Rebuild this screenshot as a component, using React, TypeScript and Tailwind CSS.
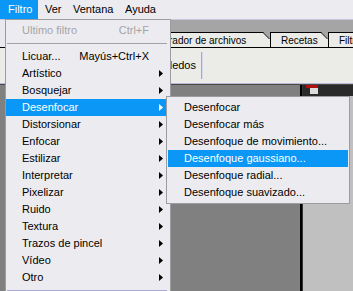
import React from 'react';

type Item =
  | { kind: 'item'; label: string; shortcut?: string; sub?: boolean; disabled?: boolean; active?: boolean }
  | { kind: 'sep'; tone?: 'gray' | 'blue' };

const filtroMenu: Item[] = [
  { kind: 'item', label: 'Ultimo filtro', shortcut: 'Ctrl+F', disabled: true },
  { kind: 'sep' },
  { kind: 'item', label: 'Licuar...', shortcut: 'Mayús+Ctrl+X' },
  { kind: 'item', label: 'Artístico', sub: true },
  { kind: 'item', label: 'Bosquejar', sub: true },
  { kind: 'item', label: 'Desenfocar', sub: true, active: true },
  { kind: 'item', label: 'Distorsionar', sub: true },
  { kind: 'item', label: 'Enfocar', sub: true },
  { kind: 'item', label: 'Estilizar', sub: true },
  { kind: 'item', label: 'Interpretar', sub: true },
  { kind: 'item', label: 'Pixelizar', sub: true },
  { kind: 'item', label: 'Ruido', sub: true },
  { kind: 'item', label: 'Textura', sub: true },
  { kind: 'item', label: 'Trazos de pincel', sub: true },
  { kind: 'item', label: 'Vídeo', sub: true },
  { kind: 'item', label: 'Otro', sub: true },
  { kind: 'sep', tone: 'blue' },
];

const desenfocarMenu: Item[] = [
  { kind: 'item', label: 'Desenfocar' },
  { kind: 'item', label: 'Desenfocar más' },
  { kind: 'item', label: 'Desenfoque de movimiento...' },
  { kind: 'item', label: 'Desenfoque gaussiano...', active: true },
  { kind: 'item', label: 'Desenfoque radial...' },
  { kind: 'item', label: 'Desenfoque suavizado...' },
];

const font = { fontFamily: '"Liberation Sans", Arial, sans-serif' };

function Arrow({ white }: { white?: boolean }) {
  return (
    <svg width="4" height="7" viewBox="0 0 4 7" className="shrink-0">
      <polygon points="0,0 4,3.5 0,7" fill={white ? '#ffffff' : '#000000'} />
    </svg>
  );
}

function MenuRows({ items }: { items: Item[] }) {
  return (
    <>
      {items.map((it, i) => {
        if (it.kind === 'sep') {
          return (
            <div key={i} className="h-[9px] pt-[4px] pl-[1px] pr-[3px]">
              <div className={`h-px ${it.tone === 'blue' ? 'bg-[#a9aad4]' : 'bg-[#a2a2a6]'}`} />
            </div>
          );
        }
        return (
          <div
            key={i}
            className={`flex h-[17px] items-center pl-[16px] pr-[7px] text-[11px] ${
              it.active ? 'bg-[#0a97f5] text-white' : it.disabled ? 'text-[#a4a4a8]' : 'text-black'
            }`}
          >
            <span className="flex-1 whitespace-nowrap">{it.label}</span>
            {it.shortcut && <span className="mr-[14px] whitespace-nowrap">{it.shortcut}</span>}
            {it.sub && <Arrow white={it.active} />}
          </div>
        );
      })}
    </>
  );
}

function Tab({ label, width, pad, last }: { label: string; width: number; pad: string; last?: boolean }) {
  return (
    <div
      className={`relative flex h-[15px] shrink-0 items-center border-l border-t border-black bg-[#ebebe7] text-[10px] text-black whitespace-nowrap ${pad}`}
      style={{ width }}
    >
      {label}
      {!last && (
        <svg width="7" height="7" viewBox="0 0 7 7" className="absolute right-0 top-[-1px]">
          <polygon points="0,0 7,0 7,7" fill="#a5a5a5" />
          <line x1="0" y1="0.5" x2="6.5" y2="7" stroke="#000" strokeWidth="1" />
        </svg>
      )}
    </div>
  );
}

export default function App() {
  return (
    <div className="relative h-[291px] w-[353px] overflow-hidden bg-[#808080]" style={font}>
      {/* Menu bar */}
      <div className="flex h-[20px] border-b border-[#c6c6de] bg-[#ebebf0] text-[11px] text-black">
        <div className="flex h-[19px] w-[38px] items-center bg-[#0a97f5] pl-[8px] text-white">Filtro</div>
        <div className="flex w-[28px] items-center pl-[7px]">Ver</div>
        <div className="flex w-[52px] items-center pl-[7px]">Ventana</div>
        <div className="flex items-center pl-[7px]">Ayuda</div>
      </div>

      {/* Palette well with tabs */}
      <div className="flex h-[28px] items-end overflow-hidden border-b border-black bg-[#a5a5a5]">
        <div className="h-full w-[6px] shrink-0 bg-[#e8e8ee]" />
        <div className="w-[132px] shrink-0" />
        <Tab label="Explorador de archivos" width={132} pad="pl-[5px]" />
        <Tab label="Recetas" width={58} pad="pl-[10px]" />
        <Tab label="Filtros" width={60} pad="pl-[10px]" last />
      </div>

      {/* Options bar */}
      <div className="flex h-[36px] items-center border-b border-[#b9b9da] bg-[#ebebe7] text-[11px] text-black">
        <div className="flex w-[196px] justify-end whitespace-nowrap">dedos</div>
        <div className="ml-[5px] h-[27px] w-[2px] border-l border-[#a6a6d4] bg-[#d8d8ee]" />
      </div>
      <div className="h-px bg-[#4a4a4a]" />

      {/* Workspace */}
      <div className="flex h-[210px]">
        <div className="flex-1 bg-[#808080]" />
        <div className="flex w-[53px] flex-col border-l-2 border-black">
          <div className="flex h-[11px] items-start border-l border-[#333] bg-[#2a2a2a] pl-[3px]">
            <div className="flex w-[12px] flex-col">
              <div className="h-[3px] w-[12px] bg-[#b01010]" />
              <div className="ml-[4px] h-[6px] w-[8px] bg-[#dcdcdc]" />
            </div>
          </div>
          <div className="flex-1 border-l border-[#333] bg-[#c0c0c0]" />
        </div>
      </div>

      {/* Filtro dropdown */}
      <div className="absolute left-[5px] top-[19px] w-[166px] border border-[#9c9ca0] bg-[#ececf0] pt-[2px] pb-[2px]">
        <MenuRows items={filtroMenu} />
      </div>

      {/* Desenfocar submenu */}
      <div className="absolute left-[166px] top-[96px] w-[184px] border border-[#9c9ca0] bg-[#ececf0] px-[1px] py-[2px]">
        <MenuRows items={desenfocarMenu} />
      </div>
    </div>
  );
}
